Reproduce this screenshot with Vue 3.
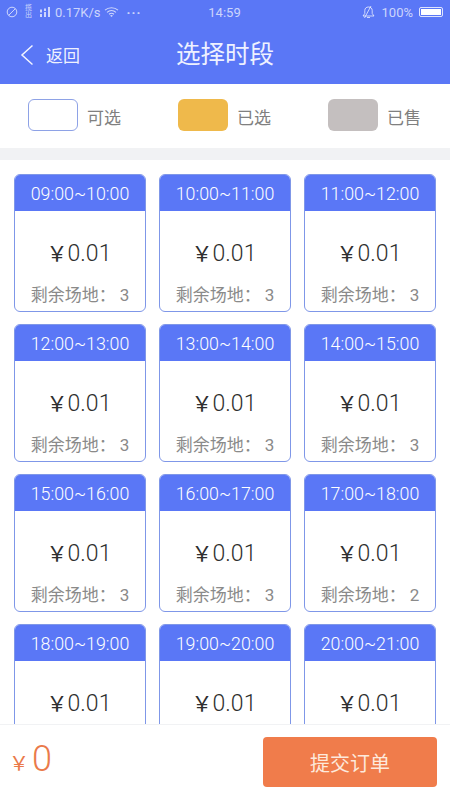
<script setup>
const slots = [
  ['09:00~10:00', 3], ['10:00~11:00', 3], ['11:00~12:00', 3],
  ['12:00~13:00', 3], ['13:00~14:00', 3], ['14:00~15:00', 3],
  ['15:00~16:00', 3], ['16:00~17:00', 3], ['17:00~18:00', 2],
  ['18:00~19:00', 3], ['19:00~20:00', 3], ['20:00~21:00', 3]
]
</script>

<template>
  <div class="page">
    <header class="top">
      <div class="status">
        <div class="status-left">
          <svg class="ic" width="12" height="12" viewBox="0 0 12 12" fill="none" stroke="currentColor" stroke-width="1"><circle cx="6" cy="6" r="4.8"/><path d="M2.8 9.2 9.2 2.8"/></svg>
          <span class="sig">
            <span class="sig-txt">揽<br>出</span>
            <svg width="11" height="12" viewBox="0 0 11 12" fill="currentColor"><rect x="0" y="8" width="2" height="3"/><rect x="0" y="3.500" width="2" height="3"/><rect x="4" y="6" width="2" height="5"/><rect x="4" y="2.500" width="2" height="2.500"/><rect x="8" y="1" width="2" height="10"/></svg>
          </span>
          <span class="speed">0.17K/s</span>
          <svg class="wifi" width="15" height="12" viewBox="0 0 15 12" fill="none" stroke="currentColor" stroke-width="1.100"><path d="M1 4.200C4.600 1 10.400 1 14 4.200"/><path d="M3 6.300c2.600-2.200 6.400-2.200 9 0"/><path d="M5 8.300c1.500-1.200 3.500-1.200 5 0"/><path d="M6.600 10.200c.5-.4 1.300-.4 1.800 0" stroke-width="1.600"/></svg>
          <span class="dots">···</span>
        </div>
        <span class="time">14:59</span>
        <div class="status-right">
          <svg width="15" height="14" viewBox="0 0 15 14" fill="none" stroke="currentColor" stroke-width="1"><path d="M2 11h11l-1.800-2.500V5.500C11.200 3.300 9.700 2 7.500 2S3.800 3.300 3.800 5.500v3z"/><path d="M6 12.500h3"/><path d="M3.500 13 10 1"/></svg>
          <span>100%</span>
          <span class="battery"><span class="battery-fill"></span></span>
        </div>
      </div>
      <div class="nav">
        <div class="back">
          <svg width="14" height="22" viewBox="0 0 14 22" fill="none" stroke="currentColor" stroke-width="1.500"><path d="M12.500 1.500 2 11l10.500 9.500"/></svg>
          <span>返回</span>
        </div>
        <h1>选择时段</h1>
      </div>
    </header>

    <section class="legend">
      <div class="legend-item"><span class="swatch free"></span><span>可选</span></div>
      <div class="legend-item"><span class="swatch chosen"></span><span>已选</span></div>
      <div class="legend-item"><span class="swatch sold"></span><span>已售</span></div>
    </section>

    <main class="list">
      <div class="grid">
        <article v-for="s in slots" :key="s[0]" class="card">
          <div class="card-head">{{ s[0] }}</div>
          <div class="price"><span class="yen">￥</span>0.01</div>
          <div class="left">剩余场地：<span class="count">{{ s[1] }}</span></div>
        </article>
      </div>
    </main>

    <footer class="bar">
      <div class="total"><span class="total-yen">￥</span><span class="total-num">0</span></div>
      <button class="submit">提交订单</button>
    </footer>
  </div>
</template>

<style scoped>
.page {
  width: 450px;
  height: 800px;
  display: flex;
  flex-direction: column;
  overflow: hidden;
  background: #fff;
  font-family: Roboto, "Noto Sans CJK SC", sans-serif;
}
.top {
  height: 84px;
  flex: none;
  background: #5a77f6;
  color: #fff;
}
.status {
  height: 24px;
  padding: 0 7px 0 6px;
  display: grid;
  grid-template-columns: 1fr auto 1fr;
  align-items: center;
  font-size: 13px;
  color: rgba(255, 255, 255, 0.7);
}
.status-left, .status-right {
  display: flex;
  align-items: center;
  gap: 3px;
}
.status-right {
  justify-content: flex-end;
  gap: 6px;
}
.sig {
  display: flex;
  align-items: center;
  margin-left: 4px;
  gap: 1px;
}
.sig-txt {
  font-size: 7px;
  line-height: 7px;
  width: 14px;
}
.speed {
  margin-left: 1px;
}
.dots {
  margin-left: 5px;
  font-weight: 700;
  letter-spacing: 1px;
}
.battery {
  width: 24px;
  height: 10px;
  box-sizing: border-box;
  border: 1px solid rgba(255, 255, 255, 0.8);
  border-radius: 2px;
  padding: 1px;
  display: flex;
}
.battery-fill {
  flex: 1;
  background: #fff;
}
.nav {
  height: 60px;
  padding-bottom: 4px;
  box-sizing: border-box;
  position: relative;
  display: flex;
  align-items: center;
  justify-content: center;
}
.back {
  position: absolute;
  left: 20px;
  top: 18px;
  display: flex;
  align-items: center;
  gap: 12px;
  font-size: 17px;
  color: rgba(255, 255, 255, 0.92);
}
h1 {
  margin: 0;
  font-size: 24.500px;
  font-weight: 400;
  color: #eef1ff;
}
.legend {
  height: 64px;
  flex: none;
  padding-left: 28px;
  display: grid;
  grid-template-columns: repeat(3, 150px);
  align-items: center;
  border-bottom: 12px solid #f1f2f4;
  box-sizing: content-box;
}
.legend-item {
  display: flex;
  align-items: center;
  gap: 9px;
  font-size: 17px;
  color: #808080;
}
.swatch {
  width: 50px;
  height: 32px;
  margin-bottom: 2px;
  box-sizing: border-box;
  border-radius: 6px;
}
.free {
  border: 1.500px solid #8ea2e6;
}
.chosen {
  background: #efb94b;
}
.sold {
  background: #c4bfbf;
}
.list {
  flex: 1;
  min-height: 0;
  overflow: hidden;
  padding: 14px 14px 0;
}
.grid {
  display: grid;
  grid-template-columns: repeat(3, 132px);
  column-gap: 13px;
  row-gap: 12px;
}
.card {
  height: 138px;
  box-sizing: border-box;
  border: 1px solid #7f97e8;
  border-radius: 6px;
  overflow: hidden;
  text-align: center;
}
.card-head {
  height: 37px;
  margin: -1px -1px 0;
  background: #5a77f6;
  color: #fff;
  font-size: 17.800px;
  font-weight: 300;
  line-height: 40px;
}
.price {
  margin-top: 28px;
  margin-right: 2px;
  font-size: 23px;
  font-weight: 300;
  line-height: 30px;
  color: #2e2e2e;
}
.yen {
  font-size: 21px;
  font-weight: 400;
}
.left {
  margin-top: 15px;
  font-size: 17px;
  line-height: 22px;
  color: #8a8a8a;
}
.count {
  margin-left: 4px;
}
.bar {
  height: 76px;
  flex: none;
  box-sizing: border-box;
  border-top: 1px solid #f1f2f4;
  padding: 13px 13px 0 9px;
  display: flex;
  justify-content: space-between;
  align-items: flex-start;
  background: #fff;
}
.total {
  color: #ea7a4a;
  display: flex;
  align-items: baseline;
  gap: 3px;
}
.total-yen {
  font-size: 20px;
}
.total-num {
  font-size: 36px;
  font-weight: 300;
  line-height: 42px;
}
.submit {
  width: 174px;
  height: 50px;
  margin-top: -1px;
  border: 0;
  border-radius: 4px;
  background: #f07c4b;
  color: #fde9dc;
  font: inherit;
  font-size: 20px;
}
</style>
